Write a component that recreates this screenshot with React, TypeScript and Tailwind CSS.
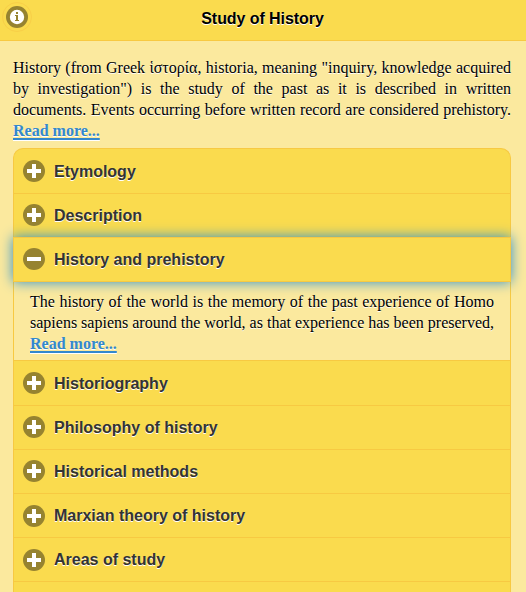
import { useState } from 'react'

// icons sit 10 or 11px below the row's top border
const sections = [
  { title: 'Etymology', spacing: 'pt-[11px]', label: 'pt-px' },
  { title: 'Description', spacing: 'pt-[10px]', label: 'pt-px' },
  { title: 'History and prehistory', spacing: 'pt-[10px]', label: 'pt-px' },
  { title: 'Historiography', spacing: 'pt-[11px]', label: 'pt-px' },
  { title: 'Philosophy of history', spacing: 'pt-[10px]', label: 'pt-px' },
  { title: 'Historical methods', spacing: 'pt-[10px]', label: 'pt-px' },
  { title: 'Marxian theory of history', spacing: 'pt-[11px]', label: 'pt-0' },
  { title: 'Areas of study', spacing: 'pt-[11px]', label: 'pt-0' },
]

function ToggleIcon({ open }: { open: boolean }) {
  return (
    <svg width="22" height="22" viewBox="0 0 22 22" className="shrink-0">
      <circle cx="11" cy="11" r="11" fill="#968330" />
      <rect x="4" y="9" width="14" height="4" fill="#fff" />
      {!open && <rect x="9" y="4" width="4" height="14" fill="#fff" />}
    </svg>
  )
}

function InfoIcon() {
  return (
    <svg width="22" height="22" viewBox="0 0 22 22">
      <circle cx="11" cy="11" r="11" fill="#968330" />
      <circle cx="11" cy="11" r="7.2" fill="#fff" />
      <path d="M10 6h2v2h-2zM9 9h3v5h1v1H9v-1h1v-4H9z" fill="#968330" />
    </svg>
  )
}

function ReadMore() {
  return (
    <a
      href="#"
      className="font-bold text-[#3388cc] underline decoration-2 underline-offset-2 [text-shadow:0_1px_0_#fff]"
    >
      Read more...
    </a>
  )
}

function App() {
  const [openIndex, setOpenIndex] = useState(2)

  return (
    <div className="h-[592px] overflow-hidden bg-[#fbe99e] font-['Liberation_Serif','Times_New_Roman',serif] text-base leading-[21px] text-black">
      <header className="relative flex h-[41px] items-center justify-center border-b border-[#f7c942] bg-[#fadb4e]">
        <button className="absolute top-[2px] left-[2px] flex size-[30px] items-center justify-center rounded-full border border-[#f8cf48]">
          <InfoIcon />
        </button>
        <h1 className="pr-px pb-[3px] font-['Liberation_Sans',Arial,sans-serif] text-base font-bold tracking-[-0.07px] [text-shadow:0_1px_0_#fff]">
          Study of History
        </h1>
      </header>

      <main className="px-[13px] pt-4 pr-[15px]">
        <p className="text-justify [text-shadow:0_1px_0_#fff]">
          History (from Greek ἱστορία, historia, meaning "inquiry, knowledge acquired by investigation") is the study
          of the past as it is described in written documents. Events occurring before written record are considered
          prehistory. <ReadMore />
        </p>

        <div className="mt-[7px]">
          {sections.map(({ title, spacing, label }, index) => {
            const open = index === openIndex
            return (
              <section key={title}>
                <button
                  onClick={() => setOpenIndex(open ? -1 : index)}
                  className={`flex w-full items-start gap-[9px] border-x border-t border-[#f7c942] bg-[#fadb4e] pl-[9px] text-left font-['Liberation_Sans',Arial,sans-serif] font-bold text-[#333] [text-shadow:0_1px_0_#fff] ${spacing} ${
                    index === 0 ? 'rounded-t-[10px]' : ''
                  } ${index === 0 || index === openIndex + 1 || open ? 'h-[45px]' : 'h-[44px]'} ${
                    open ? 'relative border-b shadow-[0_0_12px_#2a8fd0]' : ''
                  }`}
                >
                  <ToggleIcon open={open} />
                  <span className={label}>{title}</span>
                </button>
                {open && (
                  <div className="h-[78px] border-x border-[#f7c942] px-4 pt-[9px] text-justify [text-shadow:0_1px_0_#fff]">
                    The history of the world is the memory of the past experience of Homo sapiens sapiens around the
                    world, as that experience has been preserved, <ReadMore />
                  </div>
                )}
              </section>
            )
          })}
          <div className="h-11 border-x border-t border-[#f7c942] bg-[#fadb4e]" />
        </div>
      </main>
    </div>
  )
}

export default App
